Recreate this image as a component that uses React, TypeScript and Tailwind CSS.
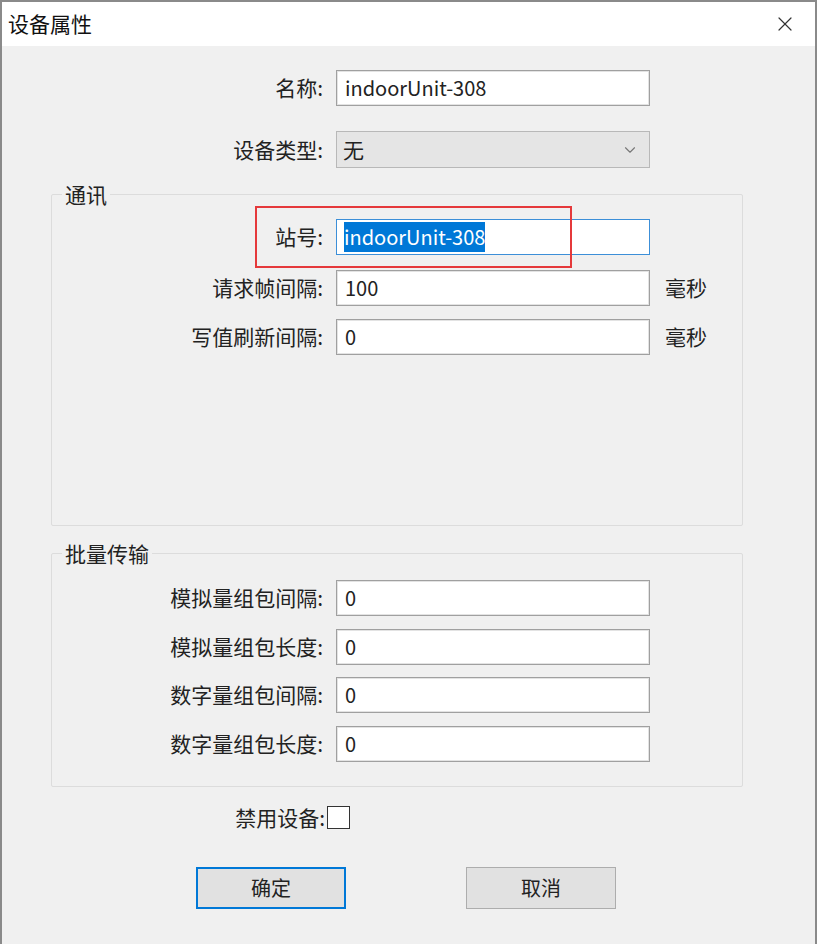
import { X, ChevronDown } from "lucide-react";

const font = { fontFamily: '"Microsoft YaHei", "Noto Sans CJK SC", sans-serif' };

type FieldProps = {
  label: string;
  value: string;
  labelWidth: string;
  unit?: string;
  className?: string;
};

const Field = ({ label, value, labelWidth, unit, className }: FieldProps) => (
  <div className={`flex items-center ${className ?? ""}`}>
    <span className={`${labelWidth} pr-[13px] text-right text-[21px] text-[#222]`}>{label}</span>
    <div className="flex h-[36px] w-[314px] items-center border border-[#a0a0a0] bg-white px-[8px] text-[20px] text-[#222] shadow-[inset_0_0_0_1px_#e3e3e3]">
      {value}
    </div>
    {unit && <span className="ml-[15px] text-[21px] text-[#222]">{unit}</span>}
  </div>
);

const GroupBox = ({ title, className, children }: { title: string; className?: string; children: React.ReactNode }) => (
  <fieldset className={`ml-[49px] w-[692px] rounded-[2px] border border-[#dcdcdc] ${className ?? ""}`}>
    <legend className="ml-[10px] px-[3px] text-[21px] leading-none text-[#222]">{title}</legend>
    {children}
  </fieldset>
);

export default function App() {
  return (
    <div className="flex h-[944px] w-[817px] flex-col overflow-hidden bg-[#f0f0f0]" style={font}>
      <div className="flex h-[46px] items-center justify-between border-t-2 border-l-2 border-r-2 border-[#8a8a8a] bg-white pl-[6px] pr-[18px]">
        <span className="text-[21px] text-[#111]">设备属性</span>
        <X className="h-[24px] w-[24px] text-[#333]" strokeWidth={1.2} />
      </div>
      <div className="flex flex-1 flex-col border-l-2 border-r-2 border-[#8a8a8a]">
        <Field label="名称:" value="indoorUnit-308" labelWidth="w-[334px]" className="mt-[24px]" />
        <div className="mt-[25px] flex items-center">
          <span className="w-[334px] pr-[13px] text-right text-[21px] text-[#222]">设备类型:</span>
          <div className="flex h-[37px] w-[314px] items-center justify-between border border-[#b8b8b8] bg-[#e5e5e5] pl-[6px] pr-[10px] text-[21px] text-[#222]">
            <span>无</span>
            <ChevronDown className="h-[18px] w-[18px] text-[#777]" strokeWidth={1.5} />
          </div>
        </div>

        <GroupBox title="通讯" className="mt-[16px] h-[342px]">
          <div className="relative mt-[14px]">
            <div className="flex items-center">
              <span className="w-[284px] pr-[13px] text-right text-[21px] text-[#222]">站号:</span>
              <div className="flex h-[36px] w-[314px] items-center border border-[#3c8fd8] bg-white px-[7px] text-[20px]">
                <span className="bg-[#0078d7] text-white">indoorUnit-308</span>
              </div>
            </div>
            <div className="absolute left-[203px] top-[-13px] h-[62px] w-[317px] border-2 border-[#e5393b]" />
          </div>
          <Field label="请求帧间隔:" value="100" labelWidth="w-[284px]" unit="毫秒" className="mt-[15px]" />
          <Field label="写值刷新间隔:" value="0" labelWidth="w-[284px]" unit="毫秒" className="mt-[13px]" />
        </GroupBox>

        <GroupBox title="批量传输" className="mt-[17px] h-[244px]">
          <Field label="模拟量组包间隔:" value="0" labelWidth="w-[284px]" className="mt-[16px]" />
          <Field label="模拟量组包长度:" value="0" labelWidth="w-[284px]" className="mt-[13px]" />
          <Field label="数字量组包间隔:" value="0" labelWidth="w-[284px]" className="mt-[12px]" />
          <Field label="数字量组包长度:" value="0" labelWidth="w-[284px]" className="mt-[13px]" />
        </GroupBox>

        <div className="mt-[15px] flex items-center">
          <span className="w-[323px] text-right text-[21px] text-[#222]">禁用设备:</span>
          <span className="ml-[2px] h-[23px] w-[23px] border border-[#333] bg-white" />
        </div>

        <div className="mt-[33px] flex">
          <button className="ml-[194px] h-[42px] w-[150px] border-2 border-[#0078d7] bg-[#e1e1e1] text-[20px] text-[#222]">
            确定
          </button>
          <button className="ml-[120px] h-[42px] w-[150px] border border-[#adadad] bg-[#e1e1e1] text-[20px] text-[#222]">
            取消
          </button>
        </div>
      </div>
    </div>
  );
}
